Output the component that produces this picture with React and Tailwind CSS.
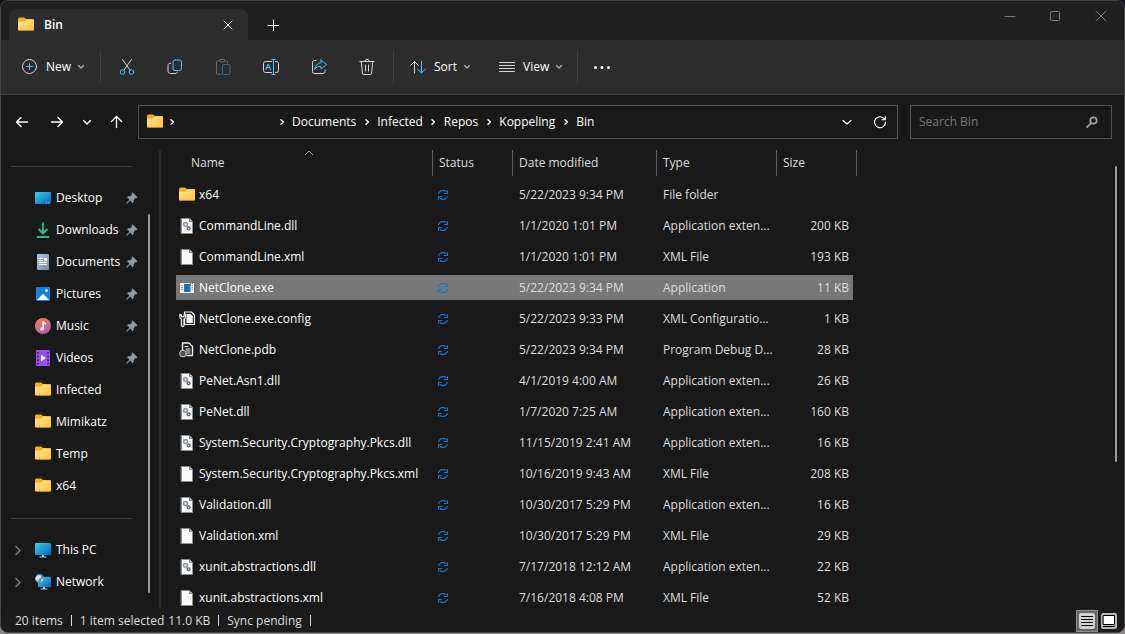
import React from 'react';

const BLUE = '#4cc2ff';

function Svg({ size = 20, className = '', children }) {
  return (
    <svg
      width={size}
      height={size}
      viewBox={`0 0 ${size} ${size}`}
      fill="none"
      stroke="#d6d6d6"
      strokeLinecap="round"
      strokeLinejoin="round"
      aria-hidden="true"
      className={`shrink-0 ${className}`}
    >
      {children}
    </svg>
  );
}

function FolderIcon() {
  return (
    <Svg size={16}>
      <defs>
        <linearGradient id="folder" x1="0" y1="0" x2="1" y2="1">
          <stop offset="0" stopColor="#ffe59a" />
          <stop offset="1" stopColor="#fdc435" />
        </linearGradient>
      </defs>
      <path d="M0 2a1.5 1.5 0 0 1 1.5-1.5h4.5L8 2H15a1 1 0 0 1 1 1v4H0Z" fill="#f5b00f" stroke="none" />
      <path d="M0 5.500a1 1 0 0 1 1-1h5.200L8.200 2.600H15a1 1 0 0 1 1 1V12.500a1 1 0 0 1-1 1H1a1 1 0 0 1-1-1Z" fill="url(#folder)" stroke="none" />
      <path d="M.6 13.200h14.800" stroke="#e8a81c" strokeWidth=".6" />
    </Svg>
  );
}

function Chevron({ dir = 'down', color = '#b4b4b4', width = 1.2 }) {
  const d = {
    down: 'M1.5 2.5 4 5l2.5-2.5',
    right: 'M3 1.8 5.4 4 3 6.2',
  }[dir];
  return (
    <Svg size={8}>
      <path d={d} stroke={color} strokeWidth={width} />
    </Svg>
  );
}

const DesktopIcon = () => (
  <Svg size={16}>
    <defs>
      <linearGradient id="desk" x1="0" y1="0" x2="1" y2="1">
        <stop offset="0" stopColor="#32d3e8" />
        <stop offset="1" stopColor="#0d63bd" />
      </linearGradient>
    </defs>
    <rect x="0" y="2" width="16" height="12" rx="1" fill="url(#desk)" stroke="none" />
    <path d="M11 12.8h1M13.2 12.8h1" stroke="#bfe6ff" strokeLinecap="butt" />
  </Svg>
);

const DownloadsIcon = () => (
  <Svg size={16}>
    <path d="M8 1v10M4 7.5 8 11.5l4-4" stroke="#25bb8b" strokeWidth="1.8" />
    <path d="M2.500 15h11" stroke="#1fb98a" strokeWidth="1.800" />
  </Svg>
);

const DocumentsIcon = () => (
  <Svg size={16}>
    <defs>
      <linearGradient id="docs" x1="0" y1="0" x2="1" y2="1">
        <stop offset="0" stopColor="#b7c9da" />
        <stop offset="1" stopColor="#6b8cab" />
      </linearGradient>
    </defs>
    <rect x="2" y="0" width="12" height="16" rx="1" fill="url(#docs)" stroke="none" />
    <path d="M4 4.5h4M4 6.5h4M4 8.5h8M4 10.5h8" stroke="#fff" strokeLinecap="butt" />
    <rect x="9" y="4" width="3" height="3" fill="#fff" stroke="none" />
  </Svg>
);

const PicturesIcon = () => (
  <Svg size={16}>
    <rect x="1" y="1" width="14" height="14" rx="1" fill="#1283d8" stroke="none" />
    <path d="M2 14 7 8.7a1.3 1.3 0 0 1 2 0L14 14Z" fill="#fff" stroke="none" />
    <circle cx="11.5" cy="4.5" r="1.3" fill="#fff" stroke="none" />
  </Svg>
);

const MusicIcon = () => (
  <Svg size={16}>
    <defs>
      <linearGradient id="music" x1="0" y1="0" x2=".7" y2="1">
        <stop offset="0" stopColor="#f08b57" />
        <stop offset="1" stopColor="#b25aa5" />
      </linearGradient>
    </defs>
    <circle cx="8" cy="8" r="8" fill="url(#music)" stroke="none" />
    <circle cx="7" cy="11" r="1.8" fill="#fff" stroke="none" />
    <path d="M8.2 11V3.8c.4 1.4 1.5 1.2 2.3 2" stroke="#fff" strokeWidth="1.4" />
  </Svg>
);

const VideosIcon = () => (
  <Svg size={16}>
    <rect x="1" y="0" width="14" height="16" rx="1" fill="#9552e6" stroke="none" />
    <path d="M3 2v13M13 2v13" stroke="#4c2294" strokeWidth="1.8" strokeDasharray="1.8 1.8" strokeLinecap="butt" />
    <path d="M6 4.8v6.4L11 8Z" fill="#fff" stroke="none" />
  </Svg>
);

const MonitorIcon = () => (
  <Svg size={16}>
    <rect x="0" y="1" width="16" height="12" rx="1" fill="url(#desk)" stroke="none" />
    <path d="M7 13h2v2H7zM4.5 14.5h7v1h-7z" fill="#b7c4cf" stroke="none" />
  </Svg>
);

const NetworkIcon = () => (
  <Svg size={16}>
    <rect x="3" y="3" width="13" height="10" rx="1" fill="url(#desk)" stroke="none" />
    <path d="M8 13h2v2H8zM5.5 14.5h7v1h-7z" fill="#b7c4cf" stroke="none" />
    <circle cx="4.6" cy="4.6" r="4.5" fill="#5a9cc6" stroke="none" />
    <path d="M1.5 2.5C3 .6 5.5 1 6 2.5S3.5 4.4 3.6 6 1 6.5.6 5 .9 3.2 1.5 2.5ZM7 5c1.300 0 1.300 1.500.3 2.300S5.500 6 7 5Z" fill="#d5eaf4" stroke="none" />
  </Svg>
);

const PinIcon = () => (
  <Svg size={12}>
    <path d="M6.700.7 11.300 5.300 10.300 6.100 9.500 5.900 7.600 7.900 7.500 10 6.600 10.700 4.300 8.400 1.200 11.300.5 11.400.6 10.700 3.600 7.700 1.300 5.400 2 4.500 4.100 4.400 6.100 2.500 5.900 1.600Z" fill="#8e9aa4" stroke="#8e9aa4" strokeWidth=".4" />
  </Svg>
);

const SyncIcon = () => (
  <svg width="10" height="10" viewBox="0 0 10 10" fill="none" stroke="#0f7ad6" strokeWidth="1.100" aria-hidden="true">
    <path d="M.5 4V3.500L2 1.500 3.500.600h3L8.300 1.800M9.500.2v3.300H6M9.500 6v.5L8 8.500 6.500 9.400h-3L1.700 8.200M.5 9.800V6.500H4" />
  </svg>
);

const Page = ({ children }) => (
  <Svg size={16}>
    <path d="M2.500.5h8l3 3v12h-11Z" fill="#fafafa" stroke="#8f8f8f" strokeWidth="1" />
    <path d="M10.500.5v3h3" fill="#b9b9b9" stroke="#6f6f6f" strokeWidth=".8" />
    {children}
  </Svg>
);

const DllIcon = () => (
  <Page>
    <circle cx="6.500" cy="6.500" r="1.900" stroke="#93a0ac" strokeWidth="1.700" />
    <circle cx="9.600" cy="10.300" r="1.400" stroke="#65717c" strokeWidth="1.500" />
  </Page>
);

const ExeIcon = () => (
  <Svg size={16}>
    <rect x="1" y="3" width="14" height="10" fill="#f2f2f2" stroke="none" />
    <path d="M2 5.500h2M2 7.500h2M2 9.500h2M12.500 5.500h1.500M12.500 7.500h1.500M12.500 9.500h1.500" stroke="#9b9b9b" strokeLinecap="butt" />
    <rect x="5" y="4" width="6.500" height="8" fill="#1173c7" stroke="none" />
    <path d="M11 3.500h3" stroke="#555" strokeDasharray="1 1" strokeLinecap="butt" />
  </Svg>
);

const ConfigIcon = () => (
  <Svg size={16}>
    <path d="M5.500 1h7l3 3v9.500h-10Z" fill="#2a2a2a" stroke="#f2f2f2" strokeWidth="1.200" />
    <path d="M7.500 3h4l2.300 2v7H7.500Z" fill="#f2f2f2" stroke="none" />
    <path d="M.8 3.300v2.500a2.600 2.600 0 0 0 1.600 2.400v6a1.200 1.200 0 0 0 2.600 0v-6a2.600 2.600 0 0 0 1.600-2.400V3.300L5 4v1.700H2.400V4Z" fill="#3a3a3a" stroke="#f2f2f2" strokeWidth="1.100" />
  </Svg>
);

const PdbIcon = () => (
  <Svg size={16}>
    <path d="M3.500 8V1h6.500l3.500 3.500V13.500H8" fill="#1e1e1e" stroke="#f2f2f2" strokeWidth="1.400" />
    <path d="M6 4.500h3M7 7h4M7.500 9h3.500M8.500 11h2.500" stroke="#f2f2f2" />
    <circle cx="4" cy="11.500" r="3.400" fill="#555" stroke="#cfcfcf" />
  </Svg>
);

const FILE_ICONS = { folder: FolderIcon, dll: DllIcon, xml: Page, exe: ExeIcon, config: ConfigIcon, pdb: PdbIcon };

const FILES = [
  ['folder', 'x64', '5/22/2023 9:34 PM', 'File folder', ''],
  ['dll', 'CommandLine.dll', '1/1/2020 1:01 PM', 'Application exten...', '200 KB'],
  ['xml', 'CommandLine.xml', '1/1/2020 1:01 PM', 'XML File', '193 KB'],
  ['exe', 'NetClone.exe', '5/22/2023 9:34 PM', 'Application', '11 KB'],
  ['config', 'NetClone.exe.config', '5/22/2023 9:33 PM', 'XML Configuratio...', '1 KB'],
  ['pdb', 'NetClone.pdb', '5/22/2023 9:34 PM', 'Program Debug D...', '28 KB'],
  ['dll', 'PeNet.Asn1.dll', '4/1/2019 4:00 AM', 'Application exten...', '26 KB'],
  ['dll', 'PeNet.dll', '1/7/2020 7:25 AM', 'Application exten...', '160 KB'],
  ['dll', 'System.Security.Cryptography.Pkcs.dll', '11/15/2019 2:41 AM', 'Application exten...', '16 KB'],
  ['xml', 'System.Security.Cryptography.Pkcs.xml', '10/16/2019 9:43 AM', 'XML File', '208 KB'],
  ['dll', 'Validation.dll', '10/30/2017 5:29 PM', 'Application exten...', '16 KB'],
  ['xml', 'Validation.xml', '10/30/2017 5:29 PM', 'XML File', '29 KB'],
  ['dll', 'xunit.abstractions.dll', '7/17/2018 12:12 AM', 'Application exten...', '22 KB'],
  ['xml', 'xunit.abstractions.xml', '7/16/2018 4:08 PM', 'XML File', '52 KB'],
];

const QUICK = [
  ['Desktop', DesktopIcon, true],
  ['Downloads', DownloadsIcon, true],
  ['Documents', DocumentsIcon, true],
  ['Pictures', PicturesIcon, true],
  ['Music', MusicIcon, true],
  ['Videos', VideosIcon, true],
  ['Infected', FolderIcon, false],
  ['Mimikatz', FolderIcon, false],
  ['Temp', FolderIcon, false],
  ['x64', FolderIcon, false],
];

const PLACES = [
  ['This PC', MonitorIcon],
  ['Network', NetworkIcon],
];

function TitleBar() {
  return (
    <header className="flex h-[39px] shrink-0 items-end bg-[#202020] pl-2">
      <div className="flex h-[31px] w-[239px] items-center rounded-t-lg bg-[#2c2c2c] pr-2.5 pl-[9px]">
        <FolderIcon />
        <h1 className="flex-1 pl-2.5 text-xs font-semibold text-white">Bin</h1>
        <button type="button" aria-label="Close tab" className="flex size-5 items-center justify-center">
          <Svg size={10}>
            <path d="M1 1l8 8M9 1 1 9" stroke="#fff" />
          </Svg>
        </button>
      </div>
      <button type="button" aria-label="New tab" className="ml-[9px] flex h-[31px] w-8 items-center justify-center">
        <Svg size={12}>
          <path d="M6.500 1v11M1 6.500h11" stroke="#fff" />
        </Svg>
      </button>
      <div className="ml-auto flex h-full pb-2.5">
        <button type="button" aria-label="Minimize" className="flex w-11 items-center justify-center">
          <Svg size={12}>
            <path d="M1 6.500h10" stroke="#808080" />
          </Svg>
        </button>
        <button type="button" aria-label="Maximize" className="flex w-[46px] items-center justify-center">
          <Svg size={12}>
            <rect x="1.500" y="1.500" width="9" height="9" rx="1" stroke="#808080" />
          </Svg>
        </button>
        <button type="button" aria-label="Close" className="flex w-[46px] items-center justify-center">
          <Svg size={12}>
            <path d="M1 1l10 10M11 1 1 11" stroke="#808080" />
          </Svg>
        </button>
      </div>
    </header>
  );
}

const Separator = () => <div className="h-8 w-px bg-[#404040]" />;

function IconButton({ label, disabled, children }) {
  return (
    <button type="button" aria-label={label} disabled={disabled} className="flex h-9 w-12 items-center justify-center">
      <Svg>{children}</Svg>
    </button>
  );
}

function MenuButton({ label, children }) {
  return (
    <button type="button" className="flex h-9 items-center gap-1.5 text-xs font-medium text-white">
      {children}
      <span>{label}</span>
      <Chevron />
    </button>
  );
}

function Toolbar() {
  return (
    <div role="toolbar" aria-label="Commands" className="flex h-[55px] shrink-0 items-center border-b border-[#3f3f3f] bg-[#2c2c2c] pl-[19px]">
      <div className="w-20">
        <MenuButton label="New">
          <Svg>
            <circle cx="9.500" cy="9.500" r="7" />
            <path d="M9.500 6.500v6M6.500 9.500h6" stroke={BLUE} />
          </Svg>
        </MenuButton>
      </div>
      <Separator />
      <div className="flex pl-[2px]">
        <IconButton label="Cut">
          <path d="M5.500 2.500 13 13M14.500 2.500 7 13" />
          <circle cx="5.500" cy="15" r="2.300" stroke={BLUE} />
          <circle cx="14.500" cy="15" r="2.300" stroke={BLUE} />
        </IconButton>
        <IconButton label="Copy">
          <path d="M5.800 6.200C4 6.200 3 7 3 8.500V14c0 1.800 1 2.500 2.500 2.500H10c1.500 0 2.400-.4 2.500-1.400" />
          <rect x="8" y="3" width="8.500" height="10.500" rx="2" stroke={BLUE} />
        </IconButton>
        <IconButton label="Paste" disabled>
          <path d="M7 3.800H4.500a1 1 0 0 0-1 1v11.400a1 1 0 0 0 1 1H8M12 3.800h1.500a1 1 0 0 1 1 1V6" stroke="#696969" />
          <rect x="6.500" y="2.500" width="5.500" height="2.300" rx="1.100" stroke="#696969" />
          <rect x="9.500" y="7.500" width="7.500" height="10" rx="1" stroke="#3d6a84" />
        </IconButton>
        <IconButton label="Rename">
          <path d="M10.500 4.500h-6a2 2 0 0 0-2 2v7a2 2 0 0 0 2 2h6M14.500 4.500h1a2 2 0 0 1 2 2v7a2 2 0 0 1-2 2h-1" />
          <path d="M12.500 2.500v15M10.800 2.500h3.400M10.800 17.500h3.400" stroke={BLUE} />
          <text x="4.300" y="13.200" fontSize="9" fill={BLUE} stroke="none" className="font-['Open_Sans',sans-serif] font-semibold">A</text>
        </IconButton>
        <IconButton label="Share">
          <path d="M7 3.500H5.500a2 2 0 0 0-2 2v9a2 2 0 0 0 2 2h8.500a2 2 0 0 0 2-2v-1.500" />
          <path d="M12 3l5.500 4.500L12 12V9.400C9 9.200 7 10.200 5.800 12.500 6 8.500 8.500 5.900 12 5.600Z" stroke={BLUE} />
        </IconButton>
        <IconButton label="Delete">
          <path d="M2.800 4.500h14.400M7.800 4.500a2.200 2.200 0 0 1 4.400 0M4.200 4.500l1.200 11.500a1.600 1.600 0 0 0 1.600 1.500h6a1.600 1.600 0 0 0 1.600-1.500L15.800 4.500M8.500 8v6M11.500 8v6" />
        </IconButton>
      </div>
      <div className="pl-[2px]">
        <Separator />
      </div>
      <div className="flex w-[183px] gap-[26px] pl-[14px]">
        <MenuButton label="Sort">
          <Svg>
            <path d="M6.500 16V4.500M2.500 8.500l4-4 4 4" />
            <path d="M13.500 4.500V16M9.500 12l4 4 4-4" stroke={BLUE} />
          </Svg>
        </MenuButton>
        <MenuButton label="View">
          <Svg>
            <path d="M2.500 5.500h15M2.500 8.500h15M2.500 11.500h15M2.500 14.500h15" />
          </Svg>
        </MenuButton>
      </div>
      <Separator />
      <IconButton label="See more">
        <path d="M3.500 10.500h.01M10 10.500h.01M16.500 10.500h.01" stroke="#fff" strokeWidth="3" />
      </IconButton>
    </div>
  );
}

function AddressRow() {
  const nav = [
    ['Back', 'M4.500 10h11M9 5.500 4.500 10 9 14.500'],
    ['Forward', 'M4.500 10h11M11 5.500l4.500 4.500-4.500 4.500'],
  ];
  return (
    <div className="flex h-[55px] shrink-0 items-start gap-3 pt-2.5 pr-3 pl-[10px]">
      <nav aria-label="Location" className="flex min-w-0 flex-1">
        <div className="flex h-[34px] w-[127px] shrink-0 items-center">
          {nav.map(([label, d]) => (
            <button key={label} type="button" aria-label={label} className="flex w-[35px] pl-px">
              <Svg>
                <path d={d} stroke="#fff" strokeWidth="1.400" />
              </Svg>
            </button>
          ))}
          <button type="button" aria-label="Recent locations" className="flex w-[26px]">
            <Svg size={12}>
              <path d="M2.500 4.500 6 8l3.500-3.500" stroke="#fff" strokeWidth="1.400" />
            </Svg>
          </button>
          <button type="button" aria-label="Up" className="flex">
            <Svg>
              <path d="M9.500 15.500v-11M4.500 9.500l5-5 5 5" stroke="#fff" strokeWidth="1.300" />
            </Svg>
          </button>
        </div>
        <div className="flex h-[34px] min-w-0 flex-1 items-center border border-[#535353] pl-2 text-xs text-white">
          <FolderIcon />
          <span className="flex w-[18px] justify-center">
            <Chevron dir="right" color="#fff" width={1.5} />
          </span>
          <span className="w-[90px]" />
          {['Documents', 'Infected', 'Repos', 'Koppeling', 'Bin'].map((name) => (
            <React.Fragment key={name}>
              <span className="flex w-[21px] shrink-0 justify-center">
                <Chevron dir="right" color="#fff" width={1.5} />
              </span>
              <a href="#" className="whitespace-nowrap">{name}</a>
            </React.Fragment>
          ))}
          <button type="button" aria-label="Previous locations" className="ml-auto flex w-8 justify-center">
            <Svg size={12}>
              <path d="M2 4.500 6 8l4-3.500" stroke="#fff" strokeWidth="1.200" />
            </Svg>
          </button>
          <button type="button" aria-label="Refresh" className="flex w-[34px] justify-center">
            <Svg size={16}>
              <path d="M12.800 5.500A5.500 5.500 0 1 0 13.500 8M13.300 2.500v3.300H10" stroke="#fff" strokeWidth="1.100" />
            </Svg>
          </button>
        </div>
      </nav>
      <label className="flex h-[34px] w-[202px] items-center border border-[#535353] pr-3 pl-2">
        <input
          type="search"
          aria-label="Search Bin"
          placeholder="Search Bin"
          className="min-w-0 flex-1 bg-transparent text-xs text-white outline-none placeholder:text-[#777777]"
        />
        <Svg size={14}>
          <circle cx="8.500" cy="5.500" r="3.200" stroke="#a0a0a0" strokeWidth="1.700" />
          <path d="M6 8.200 2 12.200" stroke="#a0a0a0" strokeWidth="1.700" />
        </Svg>
      </label>
    </div>
  );
}

function Sidebar() {
  return (
    <aside className="flex w-40 shrink-0 border-r-2 border-[#2b2b2b] bg-[#191919] pl-2.5">
      <div className="w-[121px] shrink-0 pt-4">
        <hr className="border-[#3c3c3c]" />
        <ul className="pt-[15px] pb-4">
          {QUICK.map(([name, Icon, pinned]) => (
            <li key={name}>
              <a href="#" className="flex h-8 items-center pl-6 text-xs text-white">
                <Icon />
                <span className="w-[75px] shrink-0 pl-[5px]">{name}</span>
                {pinned && <PinIcon />}
              </a>
            </li>
          ))}
        </ul>
        <hr className="border-[#3c3c3c]" />
        <ul className="pt-[15px]">
          {PLACES.map(([name, Icon]) => (
            <li key={name} className="flex h-8 items-center">
              <button type="button" aria-label={`Expand ${name}`} className="flex w-6">
                <Svg size={12}>
                  <path d="M5 2.500 9 6.500l-4 4" stroke="#7a7a7a" strokeWidth="1.500" />
                </Svg>
              </button>
              <a href="#" className="flex items-center gap-[5px] text-xs text-white">
                <Icon />
                {name}
              </a>
            </li>
          ))}
        </ul>
      </div>
      <div className="ml-4 flex pt-16 pb-4">
        <div className="w-0.5 rounded bg-[#9a9a9a]" />
      </div>
    </aside>
  );
}

function FileTable() {
  const th = 'border-r border-[#5f5f5f] pl-1.5 text-left font-normal';
  return (
    <main className="flex min-w-0 flex-1">
      <div className="-mt-1.5 min-w-0 flex-1 overflow-hidden pl-[15px]">
        <table className="w-[681px] table-fixed border-separate border-spacing-x-0 border-spacing-y-1.5 text-xs text-[#dedede]">
          <colgroup>
            <col className="w-[257px]" />
            <col className="w-20" />
            <col className="w-36" />
            <col className="w-[120px]" />
            <col className="w-[76px]" />
            <col className="w-1" />
          </colgroup>
          <thead>
            <tr className="h-[26px]">
              <th scope="col" aria-sort="ascending" className="relative border-r border-[#5f5f5f] pl-[15px] text-left font-normal">
                Name
                <svg width="10" height="6" viewBox="0 0 10 6" fill="none" className="absolute top-0 left-32" aria-hidden="true">
                  <path d="M1 5l4-4 4 4" stroke="#a6a6a6" />
                </svg>
              </th>
              <th scope="col" className={th}>Status</th>
              <th scope="col" className={th}>Date modified</th>
              <th scope="col" className={th}>Type</th>
              <th scope="col" colSpan={2} className={th}>Size</th>
            </tr>
          </thead>
          <tbody>
            {FILES.map(([kind, name, date, type, size]) => {
              const Icon = FILE_ICONS[kind];
              const selected = name === 'NetClone.exe';
              const bg = selected ? 'bg-[#777777]' : '';
              return (
                <tr key={name} aria-selected={selected} className="h-[25px]">
                  <td className={`${bg} pl-[3px]`}>
                    <span className="flex items-center gap-1 whitespace-nowrap text-white">
                      <Icon />
                      {name}
                    </span>
                  </td>
                  <td className={`${bg} pl-[5px]`}>
                    <SyncIcon />
                  </td>
                  <td className={`${bg} pl-1.5 whitespace-nowrap`}>{date}</td>
                  <td className={`${bg} pl-1.5 whitespace-nowrap`}>{type}</td>
                  <td className={`${bg} pr-1 text-right whitespace-nowrap`}>{size}</td>
                  <td />
                </tr>
              );
            })}
          </tbody>
        </table>
      </div>
      <div className="w-[9px] pt-4">
        <div className="h-[296px] w-0.5 rounded bg-[#9a9a9a]" />
      </div>
    </main>
  );
}

function StatusBar() {
  const bar = <span className="mx-2 h-[11px] w-px bg-[#dedede]" />;
  return (
    <footer className="flex h-[23px] shrink-0 items-center bg-[#1c1c1c] pr-[7px] pl-3.5 text-xs whitespace-nowrap text-[#dedede]">
      <span>20 items</span>
      {bar}
      <span>1 item selected</span>
      <span className="pl-1">11.0 KB</span>
      {bar}
      <span>Sync pending</span>
      {bar}
      <div className="ml-auto flex items-center gap-[3px]">
        <button type="button" aria-label="Details view" aria-pressed="true" className="flex size-[22px] items-center justify-center border border-[#8f8f8f] bg-[#666666]">
          <Svg size={16}>
            <rect width="16" height="16" rx="2" fill="#d0d0d0" stroke="none" />
            <path d="M2.500 3.500h11M2.500 6.500h11M2.500 9.500h11M2.500 12.500h11" stroke="#000" />
          </Svg>
        </button>
        <button type="button" aria-label="Large icons view" className="flex">
          <Svg size={16}>
            <rect width="16" height="16" rx="2" fill="#b8b8b8" stroke="none" />
            <rect x="2.500" y="2.500" width="11" height="9" fill="#fff" stroke="#000" />
            <path d="M2.500 13.500h11" stroke="#000" />
          </Svg>
        </button>
      </div>
    </footer>
  );
}

export default function App() {
  return (
    <div className="h-screen bg-linear-to-b from-[#12161c] to-[#8a8786] pb-px font-['Open_Sans','Noto_Sans',sans-serif]">
      <div className="flex h-full flex-col overflow-hidden rounded-lg border border-[#454545] bg-[#191919]">
        <TitleBar />
        <Toolbar />
        <AddressRow />
        <div className="flex min-h-0 flex-1 overflow-hidden">
          <Sidebar />
          <FileTable />
        </div>
        <StatusBar />
      </div>
    </div>
  );
}
